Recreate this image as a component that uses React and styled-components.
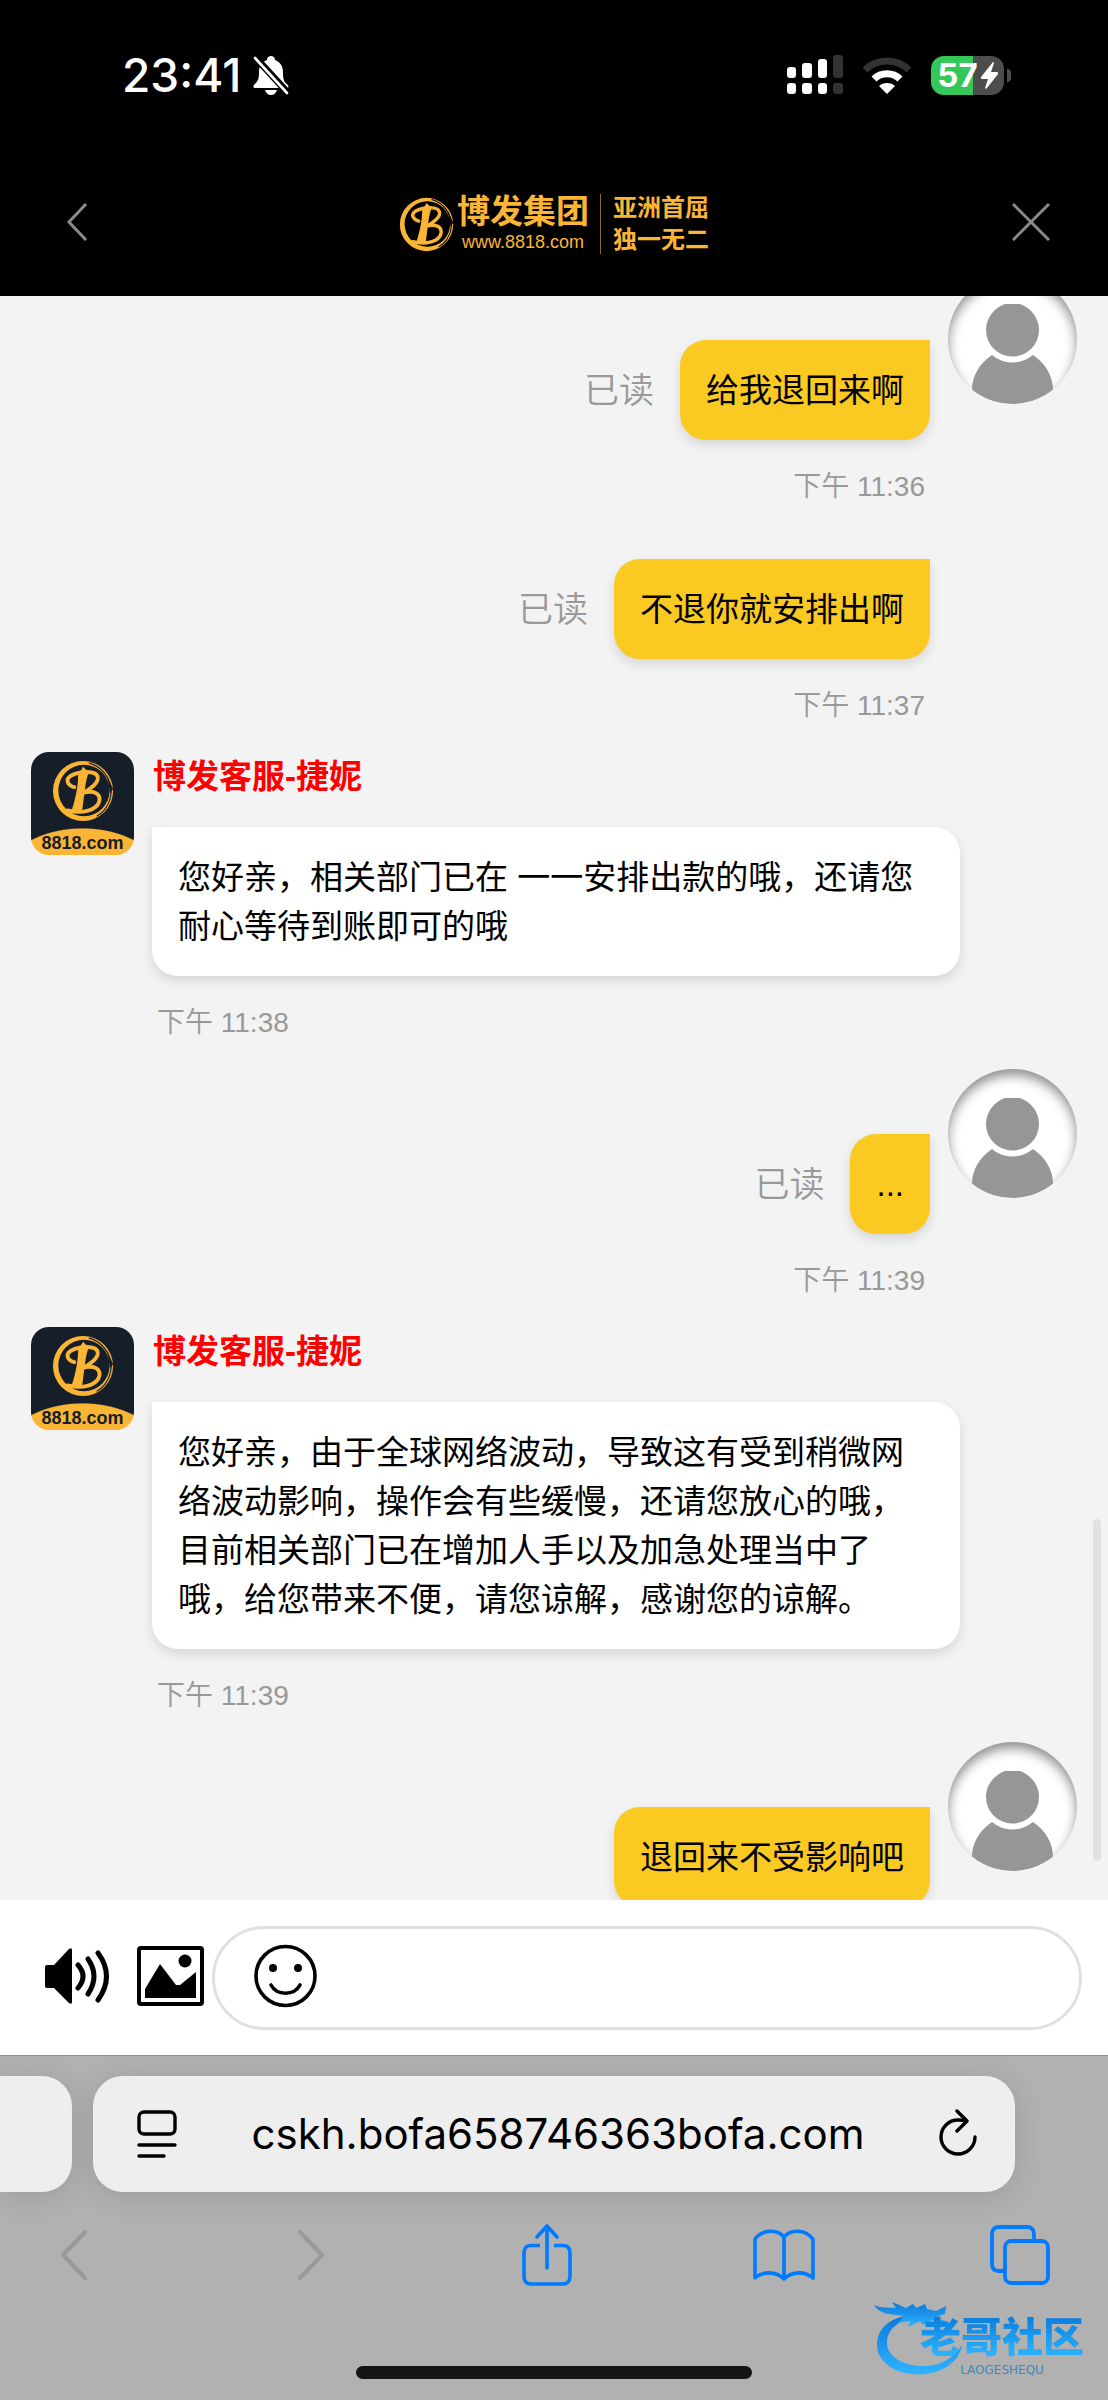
import React from "react";
import styled, { createGlobalStyle, css } from "styled-components";

const cjk = `"Liberation Sans", "Noto Sans CJK SC", sans-serif`;
const system = `Inter, "Noto Sans CJK SC", sans-serif`;
const gold = "#fbb534";
const blue = "#007aff";

const GlobalStyle = createGlobalStyle`
  *, *::before, *::after { box-sizing: border-box; }
  body { margin: 0; background: #f3f3f3; font-family: ${cjk}; }
  button, input { font: inherit; color: inherit; }
  svg { display: block; }
`;

const Screen = styled.div`
  display: flex;
  flex-direction: column;
  height: 100vh;
  overflow: hidden;
  position: relative;
`;

const IconButton = styled.button`
  display: flex;
  align-items: center;
  justify-content: center;
  flex: none;
  padding: 0;
  border: 0;
  background: none;
  cursor: pointer;
`;

/* Status bar */
const StatusBar = styled.div`
  flex: none;
  display: flex;
  align-items: center;
  justify-content: space-between;
  height: 150px;
  padding: 0 97px 0 122px;
  background: #000;
  color: #fff;
  font-family: ${system};
`;

const StatusGroup = styled.div`
  display: flex;
  align-items: center;
  gap: ${(p) => p.$gap}px;
`;

const Clock = styled.time`
  font-size: 46px;
  line-height: 48px;
  font-weight: 500;
`;

const Battery = styled.div`
  display: flex;
  align-items: center;
  gap: 3px;
`;

const BatteryBody = styled.div`
  display: flex;
  align-items: center;
  justify-content: center;
  gap: 3px;
  width: 73px;
  height: 39px;
  border-radius: 13px;
  background: linear-gradient(90deg, #34c759 57%, #4d4d4d 57%);
  font-size: 33px;
  line-height: 39px;
  font-weight: 700;
`;

const BatteryTip = styled.div`
  width: 4px;
  height: 13px;
  border-radius: 0 6px 6px 0;
  background: #4d4d4d;
`;

/* Header */
const Header = styled.header`
  flex: none;
  display: flex;
  align-items: center;
  justify-content: space-between;
  height: 146px;
  padding: 0 58px 2px;
  background: #000;
`;

const Brand = styled.div`
  display: flex;
  align-items: center;
  padding-top: 4px;
  color: ${gold};
`;

const BrandName = styled.div`
  display: flex;
  flex-direction: column;
  align-items: center;
  margin-left: 3px;
  padding-right: 11px;
  border-right: 1px solid #8d6722;
  font-weight: 700;
  font-size: 33px;
  line-height: 36px;
`;

const BrandSite = styled.span`
  font-size: 18px;
  line-height: 24px;
  font-weight: 400;
`;

const Slogan = styled.div`
  margin-left: 12px;
  font-weight: 700;
  font-size: 24px;
  line-height: 32px;
  width: 96px;
`;

/* Conversation */
const Chat = styled.main`
  flex: 1;
  min-height: 0;
  overflow: hidden;
  position: relative;
  background: #f3f3f3;
`;

const Thread = styled.div`
  display: flex;
  flex-direction: column;
  gap: 29px;
  margin-top: -21px;
  padding: 0 31px;
`;

const ScrollThumb = styled.div`
  position: absolute;
  right: 7px;
  bottom: 39px;
  width: 8px;
  height: 342px;
  border-radius: 4px;
  background: #e2e2e2;
`;

const Message = styled.article`
  display: flex;
  align-items: flex-start;
  gap: 18px;
  ${(p) => p.$mine && css`
    justify-content: flex-end;
  `}
`;

const AvatarSlot = styled.div`
  flex: none;
  width: 129px;
`;

const UserAvatar = styled.div`
  width: 129px;
  height: 129px;
  border-radius: 50%;
  overflow: hidden;
  background: #fff;
  box-shadow: inset 0 6px 12px rgba(0, 0, 0, 0.45);
`;

const AgentAvatar = styled.div`
  flex: none;
  display: flex;
  flex-direction: column;
  align-items: center;
  justify-content: space-between;
  width: 103px;
  height: 103px;
  padding-top: 8px;
  border-radius: 18px;
  overflow: hidden;
  background: radial-gradient(ellipse 84px 56px at 50% 128%, ${gold} 98%, #161e29 100%);
  color: #161e29;
  font-size: 18px;
  line-height: 23px;
  font-weight: 700;
`;

const Body = styled.div`
  display: flex;
  flex-direction: column;
  align-items: ${(p) => (p.$mine ? "flex-end" : "flex-start")};
  padding-top: ${(p) => p.$top}px;
`;

const AgentName = styled.h2`
  margin: 0 0 26px 1px;
  color: #ff0000;
  font-size: 33px;
  line-height: 49px;
  font-weight: 700;
`;

const BubbleRow = styled.div`
  display: flex;
  align-items: center;
  gap: 26px;
`;

const Bubble = styled.p`
  margin: 0;
  max-width: 808px;
  padding: 26px 26px 25px;
  border-radius: ${(p) => (p.$mine ? "26px 0 26px 26px" : "0 26px 26px 26px")};
  background: ${(p) => (p.$mine ? "#fac922" : "#fff")};
  box-shadow: 0 5px 12px rgba(0, 0, 0, 0.12);
  color: #000;
  font-size: 33px;
  line-height: 49px;
`;

const ReadMark = styled.span`
  color: #999;
  font-size: 35px;
  line-height: 49px;
  font-weight: 350;
`;

const Stamp = styled.time`
  margin: 30px 5px 0;
  color: #999;
  font-size: 28px;
  line-height: 34px;
  font-weight: 350;
`;

/* Composer */
const Composer = styled.form`
  flex: none;
  display: flex;
  align-items: center;
  height: 155px;
  padding: 0 26px 0 44px;
  background: #fff;
`;

const ComposerTools = styled.div`
  display: flex;
  align-items: center;
  gap: 26px;
  margin-right: 8px;
  padding-bottom: 3px;
`;

const Field = styled.div`
  flex: 1;
  display: flex;
  align-items: center;
  gap: 20px;
  height: 104px;
  padding: 0 39px 3px;
  border: 3px solid #e0e0e0;
  border-radius: 52px;
`;

const TextInput = styled.input`
  flex: 1;
  min-width: 0;
  border: 0;
  outline: 0;
  background: none;
  font-size: 33px;
`;

/* Browser chrome */
const Browser = styled.footer`
  flex: none;
  display: flex;
  flex-direction: column;
  height: 345px;
  padding-top: 20px;
  border-top: 1px solid #8e8e8e;
  background: #b1b1b1;
  font-family: ${system};
`;

const TabStrip = styled.div`
  display: flex;
  gap: 21px;
  height: 116px;
  padding-right: 93px;
`;

const PreviousTab = styled.div`
  width: 72px;
  border-radius: 0 30px 30px 0;
  background: #eee;
  box-shadow: 0 4px 30px rgba(0, 0, 0, 0.12);
`;

const AddressBar = styled.div`
  flex: 1;
  display: flex;
  align-items: center;
  padding: 0 38px 0 44px;
  border-radius: 30px;
  background: #eee;
  box-shadow: 0 4px 30px rgba(0, 0, 0, 0.12);
`;

const Address = styled.input`
  flex: 1;
  min-width: 0;
  padding: 0;
  border: 0;
  outline: 0;
  background: none;
  color: #000;
  text-align: center;
  font-size: 42px;
  line-height: 52px;
`;

const Toolbar = styled.nav`
  display: flex;
  align-items: center;
  justify-content: space-between;
  height: 126px;
  padding: 0 56px 0 42px;
`;

const ToolButton = styled(IconButton)`
  width: 64px;
  height: 64px;
  color: ${blue};
  &:disabled { color: #999; }
`;

const HomeIndicator = styled.div`
  align-self: center;
  width: 396px;
  height: 13px;
  margin-top: 48px;
  border-radius: 7px;
  background: #151515;
`;

const Watermark = styled.div`
  position: absolute;
  right: 24px;
  bottom: 24px;
  display: flex;
  align-items: flex-end;
`;

const WatermarkText = styled.div`
  position: relative;
  display: flex;
  flex-direction: column;
  align-items: center;
  gap: 4px;
  margin-left: -44px;
`;

const WatermarkName = styled.span`
  font-family: "Noto Sans CJK SC", sans-serif;
  font-size: 41px;
  line-height: 52px;
  font-weight: 900;
  color: transparent;
  background: linear-gradient(#0b7fe0 20%, #2bb0fb 85%);
  background-clip: text;
  -webkit-background-clip: text;
`;

const WatermarkLatin = styled.span`
  color: #4089b8;
  font-family: "DejaVu Sans", sans-serif;
  font-size: 12px;
  line-height: 12px;
`;

const BrandMark = ({ size, gap }) => (
  <svg width={size} height={size} viewBox="0 0 64 64" fill="none" aria-hidden="true">
    <path
      fill={gold}
      fillRule="evenodd"
      d="M32 1a31 31 0 1 0 0 62a31 31 0 0 0 0-62ZM33 5a26.500 26.500 0 1 1 0 53a26.500 26.500 0 0 1 0-53Z"
    />
    <path d="M38 3C52 7 61 19 61 34C60 45 54 54 46 58" stroke={gap} strokeWidth="1.200" />
    <path d="M57 16l6 14-3 5z" fill={gap} />
    <path d="M27 14C29 13 31 9 32 7L38 13C34 22 34 34 31 53L20 53C25 38 27 26 27 14Z" fill={gold} />
    <path
      d="M23 28C16 26 13 20 20 16C30 11 45 11 47 17C49 23 40 30 32 34C42 31 50 34 49 42C47 52 31 56 16 52"
      stroke={gold}
      strokeWidth="4"
      strokeLinecap="round"
    />
  </svg>
);

const Person = () => (
  <UserAvatar>
    <svg width="129" height="129" viewBox="0 0 129 129" fill="#969696" aria-hidden="true">
      <path d="M57 29H72C83 33 91 43 91 55A26.500 26.500 0 0 1 38 55C38 43 46 33 57 29Z" />
      <path d="M44 80C56 90 73 90 85 80C98 89 105 101 105 115C94 124 80 129 64.500 129S35 124 24 115C24 101 31 89 44 80Z" />
    </svg>
  </UserAvatar>
);

const Mine = ({ text, time, read, avatar }) => (
  <Message $mine>
    <Body $mine $top={avatar ? 65 : 26}>
      <BubbleRow>
        {read && <ReadMark>已读</ReadMark>}
        <Bubble $mine>{text}</Bubble>
      </BubbleRow>
      {time && <Stamp>{time}</Stamp>}
    </Body>
    <AvatarSlot>{avatar && <Person />}</AvatarSlot>
  </Message>
);

const Agent = ({ text, time }) => (
  <Message>
    <AgentAvatar>
      <BrandMark size={62} gap="#161e29" />
      8818.com
    </AgentAvatar>
    <Body $top={0}>
      <AgentName>博发客服-捷妮</AgentName>
      <Bubble>{text}</Bubble>
      <Stamp>{time}</Stamp>
    </Body>
  </Message>
);

const thread = [
  { from: "me", text: "给我退回来啊", time: "下午 11:36", read: true, avatar: true },
  { from: "me", text: "不退你就安排出啊", time: "下午 11:37", read: true },
  { from: "agent", text: "您好亲，相关部门已在 一一安排出款的哦，还请您耐心等待到账即可的哦", time: "下午 11:38" },
  { from: "me", text: "...", time: "下午 11:39", read: true, avatar: true },
  {
    from: "agent",
    text: "您好亲，由于全球网络波动，导致这有受到稍微网络波动影响，操作会有些缓慢，还请您放心的哦，目前相关部门已在增加人手以及加急处理当中了哦，给您带来不便，请您谅解，感谢您的谅解。",
    time: "下午 11:39",
  },
  { from: "me", text: "退回来不受影响吧", avatar: true },
];

export default function App() {
  return (
    <Screen>
      <GlobalStyle />
      <StatusBar>
        <StatusGroup $gap={11}>
          <Clock>23:41</Clock>
          <svg width="38" height="40" viewBox="0 0 38 40" aria-hidden="true">
            <path fill="#fff" d="M19 1c2 0 4 1 4 4c5 2 8 6 8 12c0 8 1 10 5 13c1 2 0 3-1 3H3c-2 0-2-2-1-3c4-4 5-6 5-13c0-6 3-10 8-12c0-3 2-4 4-4ZM13 35h12c-1 3-3 5-6 5s-5-2-6-5Z" />
            <path d="M3 2L36 38" stroke="#000" strokeWidth="7" />
            <path d="M3 3L35 38" stroke="#fff" strokeWidth="2.600" strokeLinecap="round" />
          </svg>
        </StatusGroup>
        <StatusGroup $gap={19}>
          <svg width="56" height="40" viewBox="0 0 56 40" fill="#fff" aria-hidden="true">
            <rect x="0" y="12" width="9" height="11" rx="3" />
            <rect x="15" y="8" width="10" height="15" rx="3" />
            <rect x="31" y="4" width="9" height="19" rx="3" />
            <rect x="46" y="0" width="10" height="23" rx="3" fill="#333" />
            <rect x="0" y="28" width="9" height="11" rx="3" />
            <rect x="15" y="28" width="10" height="11" rx="3" />
            <rect x="31" y="28" width="9" height="11" rx="3" />
            <rect x="46" y="28" width="10" height="11" rx="3" fill="#333" />
          </svg>
          <svg width="50" height="38" viewBox="0 0 50 38" fill="none" aria-hidden="true">
            <path d="M3 14C15 2 35 2 47 14" stroke="#333" strokeWidth="7" />
            <path d="M12 23C19 16 31 16 38 23" stroke="#fff" strokeWidth="7" />
            <path d="M17 30C21 26 29 26 33 30L25 38Z" fill="#fff" />
          </svg>
          <Battery>
            <BatteryBody>
              57
              <svg width="17" height="27" viewBox="0 0 17 27" fill="#fff" aria-hidden="true">
                <path d="M12 0L0 15c-1 1 0 2 1 2h6L4 26c0 1 1 1 2 0L17 12c0-1 0-2-1-2h-6l3-9c0-1-1-1-1-1Z" />
              </svg>
            </BatteryBody>
            <BatteryTip />
          </Battery>
        </StatusGroup>
      </StatusBar>

      <Header>
        <IconButton type="button" aria-label="返回">
          <svg width="38" height="38" viewBox="0 0 38 38" fill="none" stroke="#8a8a8a" strokeWidth="3">
            <path d="M28 1L11 19L28 37" />
          </svg>
        </IconButton>
        <Brand>
          <BrandMark size={55} gap="#000" />
          <BrandName>
            博发集团
            <BrandSite>www.8818.com</BrandSite>
          </BrandName>
          <Slogan>亚洲首屈独一无二</Slogan>
        </Brand>
        <IconButton type="button" aria-label="关闭">
          <svg width="38" height="38" viewBox="0 0 38 38" fill="none" stroke="#8a8a8a" strokeWidth="3">
            <path d="M1 1L37 37M37 1L1 37" />
          </svg>
        </IconButton>
      </Header>

      <Chat>
        <Thread>
          {thread.map(({ from, ...message }, i) =>
            from === "me" ? <Mine key={i} {...message} /> : <Agent key={i} {...message} />
          )}
        </Thread>
        <ScrollThumb />
      </Chat>

      <Composer onSubmit={(e) => e.preventDefault()}>
        <ComposerTools>
          <IconButton type="button" aria-label="声音">
            <svg width="67" height="58" viewBox="0 0 67 58" fill="none" stroke="#000" strokeWidth="5" strokeLinecap="round">
              <path d="M3 18H10L25 2Q28 0 28 3V55Q28 58 25 56L10 41H3Q1 41 1 39V20Q1 18 3 18Z" fill="#000" stroke="none" />
              <path d="M34 18Q44 29 34 41M44 12Q56 29 44 47M54 6Q71 29 54 53" />
            </svg>
          </IconButton>
          <IconButton type="button" aria-label="图片">
            <svg width="67" height="60" viewBox="0 0 67 60">
              <rect x="2" y="2" width="63" height="56" rx="2" fill="none" stroke="#000" strokeWidth="4" />
              <path d="M8 43L23 18L39 39H43L59 26V52H8Z" />
              <circle cx="48" cy="15" r="6.500" />
            </svg>
          </IconButton>
        </ComposerTools>
        <Field>
          <IconButton type="button" aria-label="表情">
            <svg width="63" height="64" viewBox="0 0 63 64" fill="none" stroke="#000" strokeWidth="3.600" strokeLinecap="round">
              <circle cx="31.500" cy="32" r="29.500" />
              <path d="M17 41C23 52 40 52 46 41" />
              <circle cx="19" cy="24" r="4" fill="#000" stroke="none" />
              <circle cx="44" cy="24" r="4" fill="#000" stroke="none" />
            </svg>
          </IconButton>
          <TextInput type="text" aria-label="输入消息" />
        </Field>
      </Composer>

      <Browser>
        <TabStrip>
          <PreviousTab />
          <AddressBar>
            <IconButton type="button" aria-label="页面设置">
              <svg width="40" height="48" viewBox="0 0 40 48" fill="none" stroke="#000" strokeWidth="3.400" strokeLinecap="round">
                <rect x="2" y="2" width="36" height="22" rx="5" />
                <path d="M2 35H38M2 46H27" />
              </svg>
            </IconButton>
            <Address readOnly aria-label="地址" value="cskh.bofa658746363bofa.com" />
            <IconButton type="button" aria-label="刷新">
              <svg width="38" height="50" viewBox="0 0 38 50" fill="none" stroke="#000" strokeWidth="3.400" strokeLinecap="round" strokeLinejoin="round">
                <path d="M27 12C25 11 22 11 19 11A17 17 0 1 0 36 28" />
                <path d="M18 2L28 12L18 22" />
              </svg>
            </IconButton>
          </AddressBar>
        </TabStrip>
        <Toolbar>
          <ToolButton type="button" aria-label="后退" disabled>
            <svg width="28" height="50" viewBox="0 0 28 50" fill="none" stroke="currentColor" strokeWidth="4" strokeLinecap="round" strokeLinejoin="round">
              <path d="M25 2L3 25L25 48" />
            </svg>
          </ToolButton>
          <ToolButton type="button" aria-label="前进" disabled>
            <svg width="28" height="50" viewBox="0 0 28 50" fill="none" stroke="currentColor" strokeWidth="4" strokeLinecap="round" strokeLinejoin="round">
              <path d="M3 2L25 25L3 48" />
            </svg>
          </ToolButton>
          <ToolButton type="button" aria-label="分享">
            <svg width="50" height="62" viewBox="0 0 50 62" fill="none" stroke="currentColor" strokeWidth="3.600" strokeLinejoin="round">
              <path d="M18 21.500H9Q2 21.500 2 29V52Q2 60 9 60H41Q48 60 48 52V29Q48 21.500 41 21.500H32" />
              <path d="M25 44V2M15 13L25 2L35 13" strokeLinecap="round" />
            </svg>
          </ToolButton>
          <ToolButton type="button" aria-label="书签">
            <svg width="62" height="52" viewBox="0 0 62 52" fill="none" stroke="currentColor" strokeWidth="3.600" strokeLinejoin="round">
              <path d="M31 8C24 0 10 0 2 10V49C10 42 23 42 31 50C39 42 52 42 60 49V10C52 0 38 0 31 8ZM31 8V50" />
            </svg>
          </ToolButton>
          <ToolButton type="button" aria-label="标签页">
            <svg width="60" height="60" viewBox="0 0 60 60" fill="none" stroke="currentColor" strokeWidth="3.800">
              <path d="M44 15V9Q44 2 37 2H9Q2 2 2 9V39Q2 46 9 46H15" />
              <rect x="15" y="16" width="43" height="42" rx="6" />
            </svg>
          </ToolButton>
        </Toolbar>
        <HomeIndicator />
      </Browser>

      <Watermark>
        <svg width="90" height="74" viewBox="0 0 90 74" aria-hidden="true">
          <defs>
            <linearGradient id="wave" x1="0" y1="0" x2="0" y2="1">
              <stop offset="0" stopColor="#0a78dc" />
              <stop offset="1" stopColor="#2fb4ff" />
            </linearGradient>
          </defs>
          <g fill="url(#wave)">
            <path d="M36 13C16 16 3 26 3 43C3 62 26 75 51 72C71 70 85 59 88 43C80 56 67 63 53 64C32 65 13 56 13 41C13 28 22 20 38 16Z" />
            <path d="M0 3C8 7 15 5 22 6L18 0L32 6L39 2L42 6L51 2L53 7L62 9L72 4L71 12L61 15L71 19L68 23L58 18L49 23L46 19L34 25L36 19L24 21L30 14C20 12 7 14 0 3Z" />
          </g>
        </svg>
        <WatermarkText>
          <WatermarkName>老哥社区</WatermarkName>
          <WatermarkLatin>LAOGESHEQU</WatermarkLatin>
        </WatermarkText>
      </Watermark>
    </Screen>
  );
}
